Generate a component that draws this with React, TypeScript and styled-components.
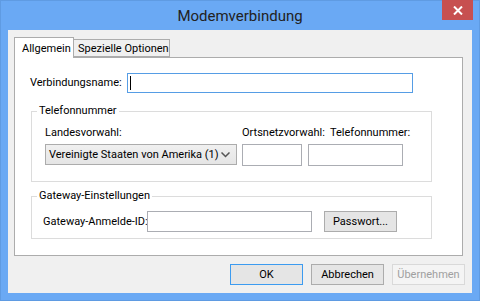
import React from "react";
import styled, { createGlobalStyle } from "styled-components";

const Global = createGlobalStyle`
  html, body { margin: 0; padding: 0; background: #6ba9f4; }
  body { font-family: Roboto, "Liberation Sans", Arial, sans-serif; font-size: 11px; color: #000; }
  * { box-sizing: border-box; }
`;

const Frame = styled.div`
  width: 480px;
  height: 301px;
  background: #6aa9f4;
  border: 1px solid #5f9be2;
  display: flex;
  flex-direction: column;
  padding: 0 7px 7px 7px;
`;

const TitleBar = styled.div`
  height: 29px;
  display: grid;
  grid-template-columns: 1fr auto 1fr;
  align-items: start;
`;

const Title = styled.div`
  grid-column: 2;
  font-size: 15px;
  color: #222;
  line-height: 30px;
`;

const CloseButton = styled.div`
  grid-column: 3;
  justify-self: end;
  width: 31px;
  height: 20px;
  margin-right: -1px;
  margin-top: -1px;
  background: #c75050;
  display: flex;
  align-items: center;
  justify-content: center;
`;

const Client = styled.div`
  flex: 1;
  background: #f0f0f0;
  display: flex;
  flex-direction: column;
  padding: 7px 9px 8px 6px;
`;

const TabStrip = styled.div`
  display: flex;
  align-items: flex-end;
  height: 20px;
  position: relative;
  z-index: 1;
`;

const Tab = styled.div<{ $active?: boolean }>`
  flex: none;
  height: ${(p) => (p.$active ? "21px" : "18px")};
  margin-bottom: ${(p) => (p.$active ? "-1px" : "0")};
  padding: 0 0 0 ${(p) => (p.$active ? "7px" : "4px")};
  display: flex;
  align-items: center;
  background: ${(p) => (p.$active ? "#fff" : "#f0f0f0")};
  border: 1px solid #acacac;
  border-bottom: ${(p) => (p.$active ? "none" : "1px solid #acacac")};
  ${(p) => (p.$active ? "" : "border-left: none;")}
  width: ${(p) => (p.$active ? "60px" : "96px")};
  white-space: nowrap;
`;

const Panel = styled.div`
  height: 199px;
  background: #fff;
  border: 1px solid #acacac;
  padding: 15px 0 0 15px;
  display: flex;
  flex-direction: column;
`;

const Row = styled.div<{ $mt?: number; $top?: boolean }>`
  display: flex;
  align-items: ${(p) => (p.$top ? "flex-start" : "center")};
  margin-top: ${(p) => p.$mt ?? 0}px;
`;

const Label = styled.span<{ $w?: number; $indent?: number; $ml?: number }>`
  flex: none;
  width: ${(p) => (p.$w ? `${p.$w}px` : "auto")};
  padding-left: ${(p) => p.$indent ?? 0}px;
  margin-left: ${(p) => p.$ml ?? 0}px;
  line-height: 14px;
  white-space: nowrap;
`;

const TextBox = styled.div<{ $w: number; $h?: number; $focus?: boolean }>`
  flex: none;
  width: ${(p) => p.$w}px;
  height: ${(p) => p.$h ?? 21}px;
  background: #fff;
  border: 1px solid ${(p) => (p.$focus ? "#569de5" : "#abadb3")};
  display: flex;
  align-items: center;
  padding-left: 2px;
`;

const Caret = styled.div`
  width: 1px;
  height: 14px;
  background: #000;
`;

const Group = styled.fieldset<{ $h: number; $mt: number }>`
  margin: ${(p) => p.$mt}px 0 0 1px;
  width: 401px;
  height: ${(p) => p.$h}px;
  border: 1px solid #dcdcdc;
  padding: 0 0 0 13px;
  min-width: 0;
`;

const Legend = styled.legend`
  padding: 0 2px;
  margin-left: -8px;
  line-height: 14px;
`;

const Col = styled.div<{ $w?: number }>`
  flex: none;
  width: ${(p) => (p.$w ? `${p.$w}px` : "auto")};
  display: flex;
  flex-direction: column;
  gap: 4px;
`;

const Select = styled.div`
  width: 192px;
  height: 21px;
  border: 1px solid #acacac;
  background: linear-gradient(#f0f0f0, #e5e5e5);
  display: flex;
  align-items: center;
  justify-content: space-between;
  padding: 0 6px 0 3px;
  white-space: nowrap;
`;

const Button = styled.div<{ $default?: boolean; $disabled?: boolean; $ml?: number }>`
  flex: none;
  width: 73px;
  height: 21px;
  margin-left: ${(p) => p.$ml ?? 0}px;
  border: 1px solid ${(p) => (p.$default ? "#3c9bf0" : p.$disabled ? "#d9d9d9" : "#acacac")};
  background: ${(p) => (p.$disabled ? "#f4f4f4" : "#e5e5e5")};
  color: ${(p) => (p.$disabled ? "#a0a0a0" : "#000")};
  display: flex;
  align-items: center;
  justify-content: center;
  white-space: nowrap;
`;

const ButtonRow = styled.div`
  display: flex;
  justify-content: flex-end;
  gap: 8px;
  margin-top: 8px;
  margin-right: -2px;
`;

export default function App() {
  return (
    <>
      <Global />
      <Frame>
        <TitleBar>
          <Title>Modemverbindung</Title>
          <CloseButton>
            <svg width="10" height="9" viewBox="0 0 10 9">
              <path d="M1 0.5 L9 8.5 M9 0.5 L1 8.5" stroke="#fff" strokeWidth="2" />
            </svg>
          </CloseButton>
        </TitleBar>
        <Client>
          <TabStrip>
            <Tab $active>Allgemein</Tab>
            <Tab>Spezielle Optionen</Tab>
          </TabStrip>
          <Panel>
            <Row>
              <Label $w={97}>Verbindungsname:</Label>
              <TextBox $w={286} $h={20} $focus>
                <Caret />
              </TextBox>
            </Row>
            <Group $h={78} $mt={11}>
              <Legend>Telefonnummer</Legend>
              <Row $top $mt={8}>
                <Col $w={197}>
                  <Label>Landesvorwahl:</Label>
                  <Select>
                    <span>Vereinigte Staaten von Amerika (1)</span>
                    <svg width="9" height="6" viewBox="0 0 9 6">
                      <path d="M0.5 0.5 L4.5 4.5 L8.5 0.5" stroke="#555" strokeWidth="1.5" fill="none" />
                    </svg>
                  </Select>
                </Col>
                <Col $w={66}>
                  <Label>Ortsnetzvorwahl:</Label>
                  <TextBox $w={60} $h={22} />
                </Col>
                <Col>
                  <Label $indent={22}>Telefonnummer:</Label>
                  <TextBox $w={95} $h={22} />
                </Col>
              </Row>
            </Group>
            <Group $h={50} $mt={7}>
              <Legend>Gateway-Einstellungen</Legend>
              <Row $mt={8}>
                <Label $w={104} $ml={-2}>Gateway-Anmelde-ID:</Label>
                <TextBox $w={165} $h={21} />
                <Button $ml={12}>Passwort...</Button>
              </Row>
            </Group>
          </Panel>
          <ButtonRow>
            <Button $default>OK</Button>
            <Button>Abbrechen</Button>
            <Button $disabled>Übernehmen</Button>
          </ButtonRow>
        </Client>
      </Frame>
    </>
  );
}
